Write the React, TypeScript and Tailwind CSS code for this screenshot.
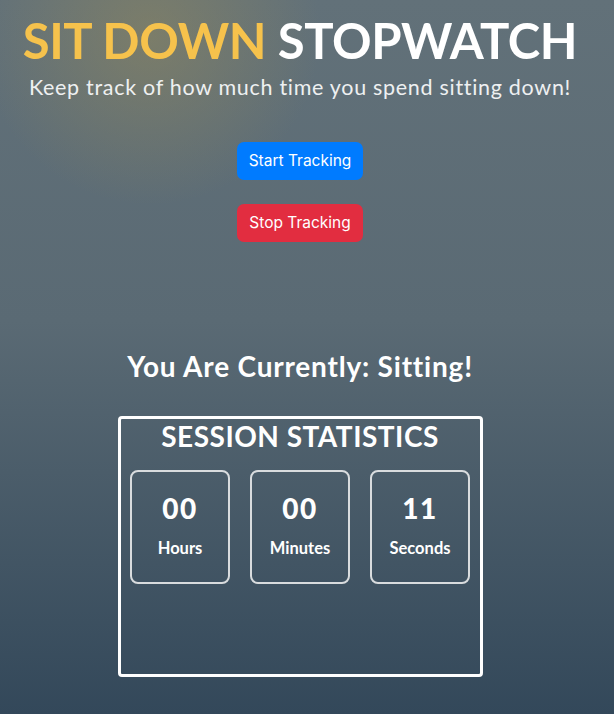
const stats = [
  { value: "00", label: "Hours" },
  { value: "00", label: "Minutes" },
  { value: "11", label: "Seconds" },
];

export default function App() {
  return (
    <div className="min-h-[714px] w-full bg-[radial-gradient(circle_at_150px_35px,rgba(150,138,90,0.5),transparent_170px),linear-gradient(to_bottom,#627179,#5a6a74_45%,#33485a)] font-['Lato','Noto_Sans',sans-serif] text-white">
      <div className="w-[600px] text-center">
        <h1 className="pt-[9px] text-[49px] font-bold leading-[62px] tracking-[-0.4px]">
          <span className="text-[#f6c24c]">SIT DOWN</span> STOPWATCH
        </h1>
        <p className="mt-[2px] text-[21.5px] leading-[28px] tracking-[0.7px] text-[#eef0f1]">
          Keep track of how much time you spend sitting down!
        </p>

        <div className="mt-[41px] flex flex-col items-center gap-[24px] font-['Inter',sans-serif]">
          <button className="h-[38px] w-[126px] rounded-[7px] bg-[#007bff] text-[15.5px] text-white">
            Start Tracking
          </button>
          <button className="h-[38px] w-[126px] rounded-[7px] bg-[#e22d40] text-[15.5px] text-white">
            Stop Tracking
          </button>
        </div>

        <h2 className="mt-[106px] text-[28px] font-bold leading-[36px] tracking-[0.8px]">
          You Are Currently: Sitting!
        </h2>

        <div className="mx-auto mt-[32px] h-[261px] w-[365px] rounded-[4px] border-[3px] border-white">
          <h3 className="mt-[1px] text-[28px] font-bold leading-[32px] tracking-[0.5px]">SESSION STATISTICS</h3>
          <div className="mt-[18px] flex justify-center gap-[20px]">
            {stats.map((s) => (
              <div
                key={s.label}
                className="flex h-[114px] w-[100px] flex-col items-center rounded-[8px] border-2 border-[#d9dcde]"
              >
                <div className="mt-[20px] text-[28px] font-black leading-[32px] tracking-[1.5px]">{s.value}</div>
                <div className="mt-[13px] text-[16.5px] font-bold leading-[22px]">{s.label}</div>
              </div>
            ))}
          </div>
        </div>
      </div>
    </div>
  );
}
